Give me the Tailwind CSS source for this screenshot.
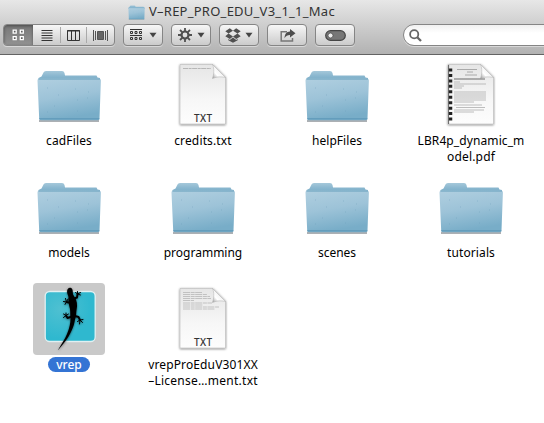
<!DOCTYPE html>
<html lang="en">
<head>
<meta charset="utf-8">
<title>V-REP_PRO_EDU_V3_1_1_Mac</title>
<script src="https://cdn.jsdelivr.net/npm/@tailwindcss/browser@4"></script>
</head>
<body class="w-[544px] h-[423px] overflow-hidden bg-white text-black font-['Noto_Sans','Open_Sans',sans-serif]">
<svg class="absolute size-0" aria-hidden="true">
  <defs>
    <linearGradient id="front" x1="0" y1="0" x2=".25" y2="1"><stop offset="0" stop-color="#b0cfe0"/><stop offset=".5" stop-color="#9dc3d8"/><stop offset="1" stop-color="#78adc8"/></linearGradient>
    <linearGradient id="back" x1="0" y1="0" x2="0" y2="1"><stop offset="0" stop-color="#a5c8da"/><stop offset=".4" stop-color="#8ab7cf"/><stop offset="1" stop-color="#6fa5c3"/></linearGradient>
    <linearGradient id="paper" x1="0" y1="0" x2="0" y2="1"><stop offset="0" stop-color="#e6e6e6"/><stop offset=".6" stop-color="#f7f7f7"/><stop offset="1" stop-color="#fdfdfd"/></linearGradient>
    <linearGradient id="curl" x1="0" y1="1" x2="1" y2="0"><stop offset="0" stop-color="#999"/><stop offset=".3" stop-color="#fff"/><stop offset="1" stop-color="#ddd"/></linearGradient>
    <radialGradient id="teal" cx=".3" cy=".35" r=".6"><stop offset="0" stop-color="#4fc0d1"/><stop offset="1" stop-color="#2fb8cf"/></radialGradient>
    <filter id="soft" x="-20%" y="-20%" width="140%" height="140%"><feDropShadow dx="0" dy=".7" stdDeviation=".8" flood-color="#000" flood-opacity=".55"/></filter>
    <symbol id="folder" viewBox="0 0 72 72">
      <path d="M6 62h60" stroke="#555d66" stroke-opacity=".65" stroke-width="1.6"/>
      <path d="M5 24 5.5 19 8.5 17.500 10.500 13.500Q11 12 13 12H29Q31 12 31.500 14L32 16.500H63.500L64.500 18.500 67 19V24Z" fill="url(#back)"/>
      <path d="M4.500 21.500Q4.300 19.800 6 19.800H66.500Q68 19.800 67.900 21.500L66.500 59.500Q66.500 61.300 64.500 61.300H8Q6.300 61.300 6.200 59.500Z" fill="url(#front)"/>
      <path d="M5.500 20.300H67" stroke="#75a8c4" stroke-width=".8"/>
      <path d="M6.300 59.800H66.300" stroke="#649dbc" stroke-width="1.400"/>
      <path d="M14 29h1m10 7h1m16-6h1m11 9h1m-34 8h1m22 5h1m-31 1h1m40-20h1m-12 8h1" stroke="#699eb9" stroke-opacity=".5" stroke-width=".8"/>
    </symbol>
    <symbol id="sheet" viewBox="0 0 72 72">
      <path d="M13 5.500H46L58.500 18V65H13Z" fill="url(#paper)" stroke="#bbb" stroke-width=".6" filter="url(#soft)"/>
      <path d="M45.500 5.500C47.500 10 47 15 45.500 19.500 50 17.500 54 17.500 58.500 18.500Z" fill="url(#curl)" stroke="#aaa" stroke-width=".5"/>
    </symbol>
    <symbol id="tri" viewBox="0 0 8 6"><path d="M.5 .7h7L4 5.500z" fill="#444"/></symbol>
  </defs>
</svg>

<header class="h-[55px] border-b border-[#636363] bg-linear-to-b from-[#e7e7e7] to-[#b2b2b2]">
  <div class="flex h-6 items-center pl-[128px] text-[13px] text-[#333]">
    <svg class="mr-[4px] h-[15px] w-[17px] shrink-0" viewBox="3 10 66 54" preserveAspectRatio="none"><use href="#folder" width="72" height="72"/></svg>
    <span class="whitespace-nowrap tracking-[0.25px]">V–REP_PRO_EDU_V3_1_1_Mac</span>
  </div>
  <div class="flex h-[22px] pl-[3px]">
    <div class="flex h-[22px] w-[112px] overflow-hidden rounded-[4px] border border-[#858585] bg-linear-to-b from-[#f7f7f7] to-[#cbcbcb] shadow-[0_1px_0_#ffffff70]">
      <div class="flex w-[29px] items-center justify-center bg-linear-to-b from-[#777] to-[#929292] shadow-[inset_0_1px_3px_#00000060]">
        <svg class="h-[12px] w-[13px]" viewBox="0 0 13 12" fill="#5e5e5e" stroke="#fff" stroke-width="1.300"><path d="M1.200 1.200h3v3h-3zM8.300 1.200h3v3h-3zM1.200 7.700h3v3h-3zM8.300 7.700h3v3h-3z"/></svg>
      </div>
      <div class="flex w-[27px] items-center justify-center"><svg class="h-[11px] w-[12px]" viewBox="0 0 12 11" stroke="#333"><path d="M.5 .5h11M.5 3h11M.5 5.500h11M.5 8h11M.5 10.500h11"/></svg></div>
      <div class="my-[2px] flex w-[27px] items-center justify-center border-x border-[#aaa]"><svg class="h-[11px] w-[13px]" viewBox="0 0 13 11" fill="none" stroke="#333"><path d="M.5 .5h12v10H.5zM4.500 .5v10M8.500 .5v10M0 1h13"/></svg></div>
      <div class="flex flex-1 items-center justify-center"><svg class="h-[11px] w-[15px]" viewBox="0 0 15 11" stroke="#555" fill="none"><path d="M.5 0v11M2.500 1v9M12.500 1v9M14.500 0v11"/><path d="M4.500 1.500h6v8h-6z" fill="#666"/></svg></div>
    </div>
    <div class="ml-2 flex h-[22px] w-[40px] items-center justify-center gap-[7px] rounded-[4px] border border-[#858585] bg-linear-to-b from-[#f7f7f7] to-[#cbcbcb] shadow-[0_1px_0_#ffffff70]">
      <svg class="h-[12px] w-[12px]" viewBox="0 0 12 12" fill="none" stroke="#333"><path d="M0 .5h12M0 6.500h12"/><path d="M.5 2.500h2v2h-2zM5 2.500h2v2H5zM9.500 2.500h2v2h-2zM.5 8.500h2v2h-2zM5 8.500h2v2H5zM9.500 8.500h2v2h-2z"/></svg>
      <svg class="h-[6px] w-[8px]"><use href="#tri"/></svg>
    </div>
    <div class="ml-2 flex h-[22px] w-[40px] items-center justify-center gap-[5px] rounded-[4px] border border-[#858585] bg-linear-to-b from-[#f7f7f7] to-[#cbcbcb] shadow-[0_1px_0_#ffffff70]">
      <svg class="size-[14px]" viewBox="0 0 14 14" fill="none" stroke="#505050"><circle cx="7" cy="7" r="3.500" stroke-width="2.200"/><path stroke-width="1.800" d="M7 0v3M7 11v3M0 7h3M11 7h3M2 2l2.200 2.200M9.800 9.800 12 12M2 12l2.200-2.200M9.800 4.200 12 2"/></svg>
      <svg class="h-[6px] w-[8px]"><use href="#tri"/></svg>
    </div>
    <div class="ml-2 flex h-[22px] w-[40px] items-center justify-center gap-[4px] rounded-[4px] border border-[#858585] bg-linear-to-b from-[#f7f7f7] to-[#cbcbcb] shadow-[0_1px_0_#ffffff70]">
      <svg class="h-[15px] w-[16px]" viewBox="0 0 16 15" fill="#505050"><path d="M4.800 .3 8 2.800 3.500 5.600.3 3.200zM11.200.3 8 2.800l4.500 2.800 3.200-2.400zM.3 8.200 3.500 5.600 8 8.400l-3.200 2.500zM15.700 8.200l-3.200-2.600L8 8.400l3.200 2.500zM3.300 11l1.500 1L8 9.500l3.200 2.500 1.500-1v1.200L8 14.800l-4.700-2.600z"/></svg>
      <svg class="h-[6px] w-[8px]"><use href="#tri"/></svg>
    </div>
    <div class="ml-2 flex h-[22px] w-[40px] items-center justify-center rounded-[4px] border border-[#858585] bg-linear-to-b from-[#f7f7f7] to-[#cbcbcb] shadow-[0_1px_0_#ffffff70]">
      <svg class="ml-[2px] h-[13px] w-[16px]" viewBox="0 0 16 13"><path d="M7 2.700H1.200v9.200h11.300V9" fill="none" stroke="#777" stroke-width="1.500"/><path d="M10 0l5.500 4.200L10 8.400V6C7.500 6 5.800 7 4.500 9.200 4.700 5 6.600 2.700 10 2.500z" fill="#4d4d4d"/></svg>
    </div>
    <div class="ml-2 flex h-[22px] w-[40px] items-center justify-center rounded-[4px] border border-[#858585] bg-linear-to-b from-[#f7f7f7] to-[#cbcbcb] shadow-[0_1px_0_#ffffff70]">
      <svg class="h-[11px] w-[21px]" viewBox="0 0 21 11"><rect x=".7" y=".7" width="19.600" height="9.600" rx="4.800" fill="#777" stroke="#454545" stroke-width="1.200"/><circle cx="5.500" cy="5.500" r="2.500" fill="#eee" stroke="#444" stroke-width=".7"/></svg>
    </div>
    <div class="-mr-5 ml-[48px] flex h-[22px] flex-1 items-center rounded-l-full border border-[#858585] bg-linear-to-b from-[#f0f0f0] to-white to-40% pl-[5px] shadow-[0_1px_0_#ffffff70]">
      <svg class="size-[13px]" viewBox="0 0 13 13" fill="none" stroke="#666"><circle cx="5.200" cy="5.200" r="4.100" stroke-width="1.800"/><path d="M8.300 8.300 12 12" stroke-width="2.300"/></svg>
    </div>
  </div>
</header>

<main class="grid grid-cols-[repeat(4,134px)] auto-rows-[112px] pl-[2px] pt-[4px] text-[12px] leading-[16px]">
  <div class="flex flex-col items-center"><svg class="size-[72px]"><use href="#folder"/></svg><span class="mt-[2px] whitespace-nowrap tracking-[0.15px]">cadFiles</span></div>
  <div class="flex flex-col items-center">
    <svg class="size-[72px]" viewBox="0 0 72 72"><use href="#sheet"/><path d="M16 9.500h28" stroke="#aaa" stroke-dasharray="5 .6 3 .5" stroke-width=".8"/><text x="36" y="62.500" text-anchor="middle" font-size="10" font-weight="500" fill="#333" textLength="18">TXT</text></svg>
    <span class="mt-[2px] whitespace-nowrap tracking-[0.15px]">credits.txt</span></div>
  <div class="flex flex-col items-center"><svg class="size-[72px]"><use href="#folder"/></svg><span class="mt-[2px] whitespace-nowrap tracking-[0.05px]">helpFiles</span></div>
  <div class="flex flex-col items-center">
    <svg class="size-[72px]" viewBox="0 0 72 72"><use href="#sheet"/>
      <path d="M22 10.500h20M32 13h6M30 16h12" stroke="#999" stroke-width=".8"/>
      <path d="M19 20h31" stroke="#888" stroke-width="1.300"/>
      <path d="M19 23h6M19 25h32M19 27h10M19 29h8M19 33h32M19 35h32M19 37h32M19 39h32M19 41h32M19 43h20M19 46h28M21 48.500h29M19 51h30M19 53h20" stroke="#b5b5b5" stroke-width=".9"/>
      <path d="M15.500 9.500V62" stroke="#222" stroke-width="3.500" stroke-dasharray="3 2.450"/><path d="M13.600 6v59" stroke="#444" stroke-width=".8"/></svg>
    <span class="mt-[2px] whitespace-nowrap tracking-[0.1px]">LBR4p_dynamic_m</span><span class="whitespace-nowrap tracking-[0.17px]">odel.pdf</span></div>

  <div class="flex flex-col items-center"><svg class="size-[72px]"><use href="#folder"/></svg><span class="mt-[2px] whitespace-nowrap">models</span></div>
  <div class="flex flex-col items-center"><svg class="size-[72px]"><use href="#folder"/></svg><span class="mt-[2px] whitespace-nowrap">programming</span></div>
  <div class="flex flex-col items-center"><svg class="size-[72px]"><use href="#folder"/></svg><span class="mt-[2px] whitespace-nowrap">scenes</span></div>
  <div class="flex flex-col items-center"><svg class="size-[72px]"><use href="#folder"/></svg><span class="mt-[2px] whitespace-nowrap tracking-[0.1px]">tutorials</span></div>

  <div class="flex flex-col items-center">
    <div class="size-[72px] rounded-[4px] bg-[#c9c9c9]">
      <svg class="size-[72px]" viewBox="0 0 72 72">
        <rect x="12.200" y="8.500" width="50" height="50" rx="4.500" fill="url(#teal)" stroke="#e0f0f2" stroke-width="1.300"/>
        <g filter="url(#soft)" fill="#050505">
          <path d="M37 4.800C38.500 4.600 39.600 6 39.700 8 39.900 10 39.600 11 41 13 44 17 44.800 22 43.500 27 43 30 43.500 33 42 36.500 41 44 37 52 32.500 58 29.500 62 27 65 24.700 67.500 28 62 32 56 34 51 36.500 45 37.500 40 37.500 36 37 32 37.500 30 37 26 36 22 35 18 35.500 14 35.300 12 33.500 10 34.200 7.500 34.700 5.700 35.500 5 37 4.800Z"/>
          <path d="M41 15.500 44 14.500 44.500 11M38 20 33.500 19M39 33.500 34.500 35 33 32.500M42 33 45.500 34 47 37" fill="none" stroke="#050505" stroke-width="1.900" stroke-linejoin="round"/>
          <path d="M44.500 11 42.500 9.500M44.500 11V8.500M44.500 11 47.500 9.500M44.500 11 47.500 12M33.500 19 30.500 18.500M33.500 19 32.500 15.500M33.500 19 32 21.500M33.500 19 35 16M33 32.500 30.500 31M33 32.500V30M33 32.500 30.500 34.500M33 32.500 35.500 31M47 37 44.500 38.500M47 37 46.500 41M47 37 49.500 39.500M47 37 50 36.500" stroke="#050505" stroke-width="1" stroke-linecap="round"/>
        </g>
      </svg>
    </div>
    <span class="mt-[2px] flex h-[15px] w-[42px] items-center justify-center rounded-full bg-[#3474d4] font-medium text-white"><span>vrep</span></span></div>
  <div class="flex flex-col items-center">
    <svg class="size-[72px]" viewBox="0 0 72 72"><use href="#sheet"/><path d="M16 9.500h19M16 11.500h24M16 13.500h27M16 15.500h28M16 17.500h11M16 20h29M16 22h20M16 24h36M16 26h32" stroke="#bcbcbc" stroke-width=".9" stroke-dasharray="7 .7 4 .5"/><text x="36" y="62.500" text-anchor="middle" font-size="10" font-weight="500" fill="#333" textLength="18">TXT</text></svg>
    <span class="mt-[2px] whitespace-nowrap tracking-[0.13px]">vrepProEduV301XX</span><span class="whitespace-nowrap tracking-[0.26px]">–License…ment.txt</span></div>
</main>
</body>
</html>
